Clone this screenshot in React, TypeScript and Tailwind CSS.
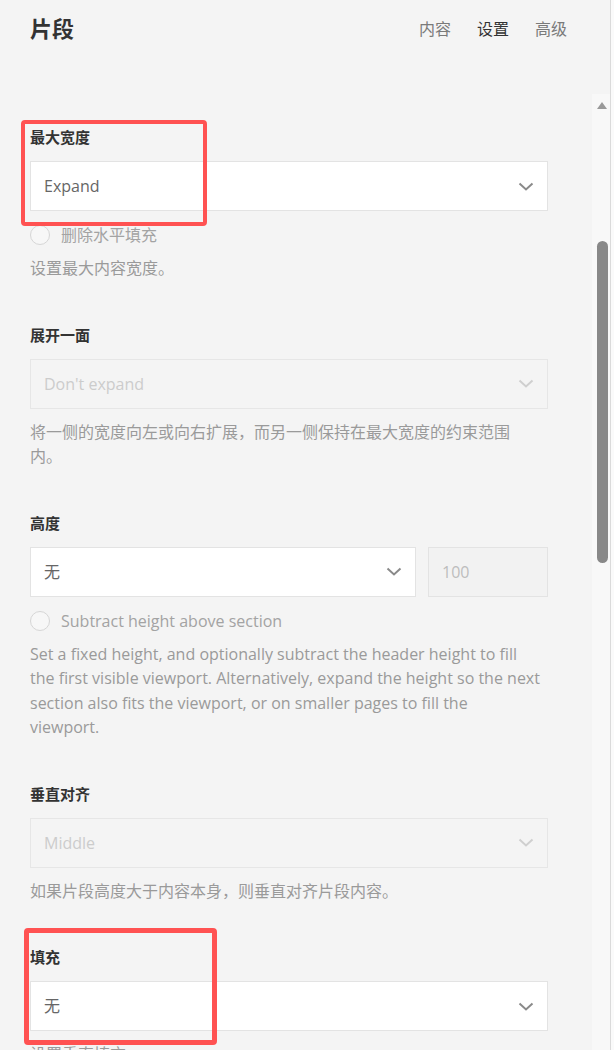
import React from 'react';

const FONT = "font-['Open_Sans','Noto_Sans_CJK_SC',sans-serif]";

function Chevron({ light }: { light?: boolean }) {
  return (
    <svg width="16" height="9" viewBox="0 0 16 9" className="shrink-0">
      <polyline
        points="1.5,1.5 8,7.5 14.5,1.5"
        fill="none"
        stroke={light ? '#cfcfcf' : '#8a8a8a'}
        strokeWidth="2"
      />
    </svg>
  );
}

function Select({ value, disabled, className = '' }: { value: string; disabled?: boolean; className?: string }) {
  return (
    <div
      className={`h-[50px] flex items-center justify-between pl-[13px] pr-[13px] border ${
        disabled ? 'bg-[#f4f4f4] border-[#e6e6e6] text-[#cccccc]' : 'bg-white border-[#e3e3e3] text-[#666666]'
      } ${className}`}
    >
      <span className="text-[16px] leading-6">{value}</span>
      <Chevron light={disabled} />
    </div>
  );
}

function Radio({ label }: { label: string }) {
  return (
    <div className="mt-[12px] h-6 flex items-center gap-[11px]">
      <span className="w-5 h-5 rounded-full border border-[#d6d6d6] bg-[#f7f7f7]" />
      <span className="text-[16px] leading-6 text-[#a3a3a3]">{label}</span>
    </div>
  );
}

function Label({ children }: { children: React.ReactNode }) {
  return <div className="text-[15px] leading-5 font-bold text-[#333333] mb-[14px]">{children}</div>;
}

function Desc({ children, after = 'select' }: { children: React.ReactNode; after?: 'select' | 'radio' }) {
  return (
    <p
      className={`${after === 'radio' ? 'mt-[9px]' : 'mt-[11px]'} max-w-[510px] text-[16px] leading-[24.5px] text-[#9a9a9a]`}
    >
      {children}
    </p>
  );
}

export default function App() {
  return (
    <div className={`${FONT} relative flex h-[1050px] w-[614px] overflow-hidden bg-[#f4f4f4]`}>
      <div className="w-[610px] flex flex-col">
        {/* header */}
        <div className="h-[94px] shrink-0">
          <div className="h-[55px] flex items-center justify-between pl-[30px] pr-[43px]">
            <h1 className="text-[22px] leading-[30px] font-bold text-[#333333]">片段</h1>
            <nav className="flex items-center gap-[26px] text-[16px] leading-6 pt-[2px]">
              <span className="text-[#7a7a7a]">内容</span>
              <span className="text-[#333333]">设置</span>
              <span className="text-[#7a7a7a]">高级</span>
            </nav>
          </div>
        </div>

        {/* body */}
        <div className="flex flex-1">
          <div className="w-[548px] pl-[30px] pt-[33px] flex flex-col gap-[44px]">
            <section>
              <Label>最大宽度</Label>
              <Select value="Expand" />
              <Radio label="删除水平填充" />
              <Desc after="radio">设置最大内容宽度。</Desc>
            </section>

            <section>
              <Label>展开一面</Label>
              <Select value="Don't expand" disabled />
              <Desc>将一侧的宽度向左或向右扩展，而另一侧保持在最大宽度的约束范围内。</Desc>
            </section>

            <section>
              <Label>高度</Label>
              <div className="flex gap-[12px]">
                <Select value="无" className="flex-1" />
                <div className="w-[120px] h-[50px] flex items-center pl-[13px] bg-[#f2f2f2] border border-[#e3e3e3] text-[16px] text-[#bdbdbd]">
                  100
                </div>
              </div>
              <Radio label="Subtract height above section" />
              <Desc after="radio">
                Set a fixed height, and optionally subtract the header height to fill the first visible viewport.
                Alternatively, expand the height so the next section also fits the viewport, or on smaller pages to
                fill the viewport.
              </Desc>
            </section>

            <section>
              <Label>垂直对齐</Label>
              <Select value="Middle" disabled />
              <Desc>如果片段高度大于内容本身，则垂直对齐片段内容。</Desc>
            </section>

            <section>
              <Label>填充</Label>
              <Select value="无" />
              <Desc>设置垂直填充。</Desc>
            </section>
          </div>

          <div className="flex-1" />

          {/* scrollbar */}
          <div className="w-[18px] bg-[#f8f8f8] flex flex-col items-center">
            <div className="mt-[8px] ml-[1px] w-0 h-0 border-l-[5px] border-r-[5px] border-b-[7px] border-l-transparent border-r-transparent border-b-[#999999]" />
            <div className="mt-[132px] ml-[2px] w-[11px] h-[322px] rounded-full bg-[#888888]" />
          </div>
        </div>
      </div>
      <div className="w-px bg-[#dadada]" />
      <div className="flex-1 bg-[#fafafa]" />

      {/* annotation boxes */}
      <div className="absolute left-[21px] top-[120px] w-[186px] h-[106px] border-4 border-[#ff5252] rounded-[4px]" />
      <div className="absolute left-[24px] top-[928px] w-[193px] h-[117px] border-[5px] border-[#ff5252] rounded-[4px]" />
    </div>
  );
}
